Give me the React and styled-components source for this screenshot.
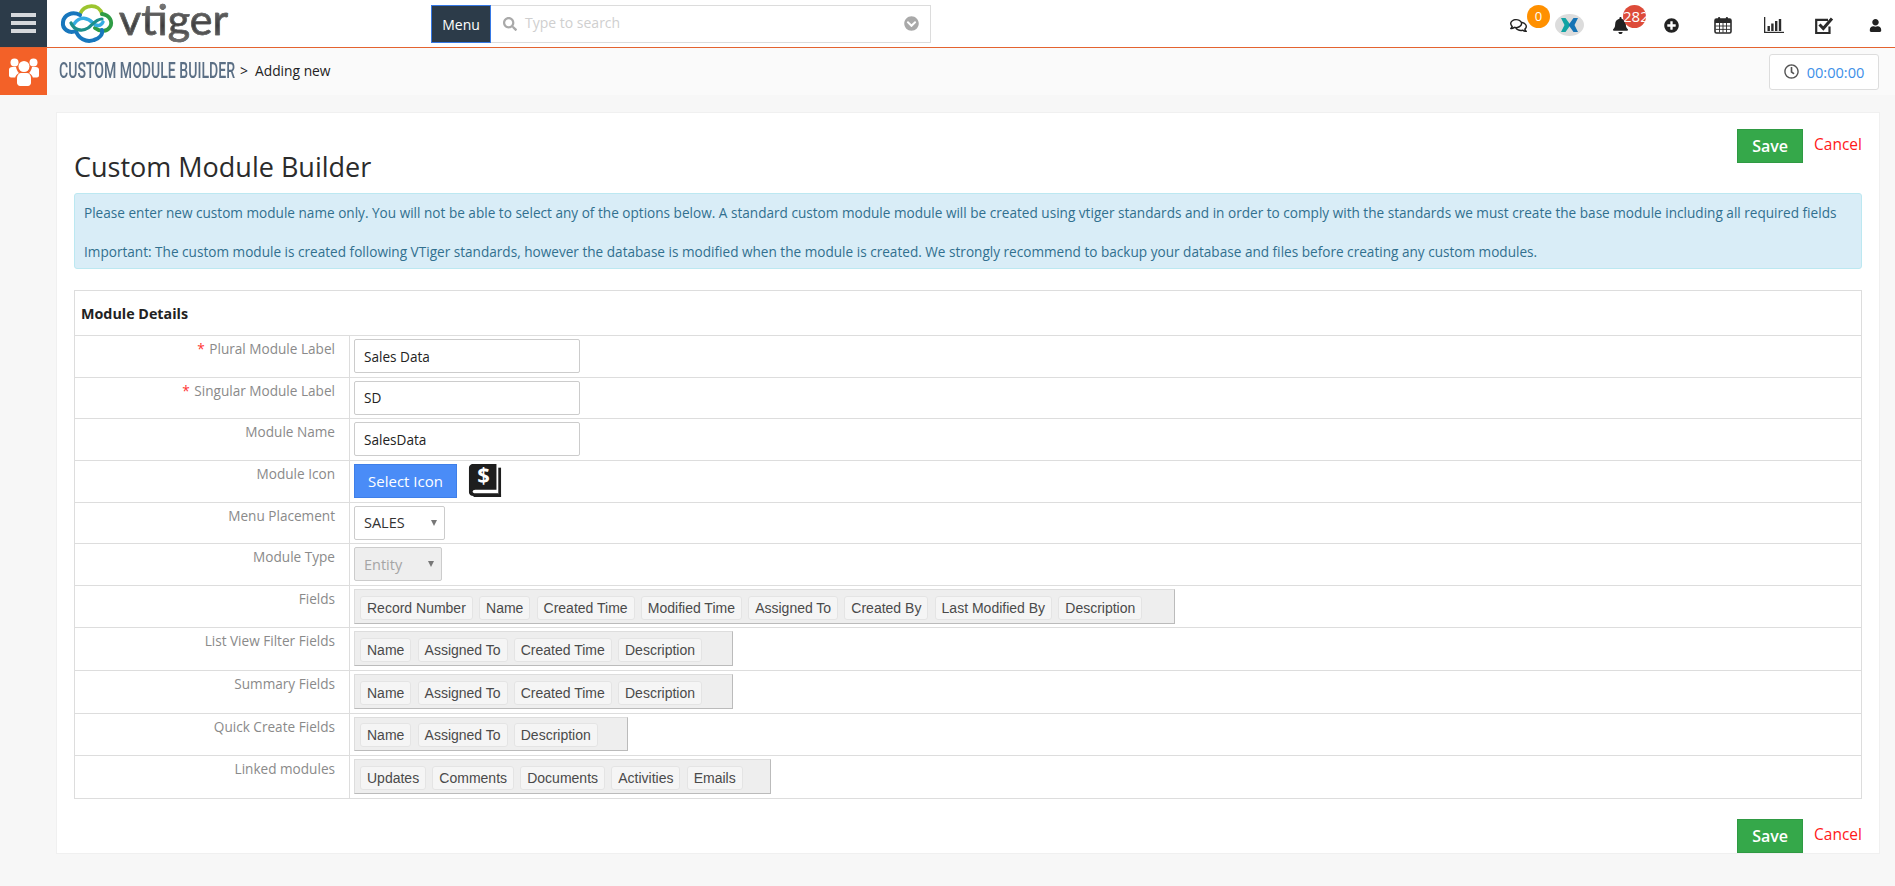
import React from 'react';
import styled, { createGlobalStyle } from 'styled-components';
import { FaSearch, FaChevronCircleDown, FaRegComments, FaBell, FaPlusCircle, FaUser, FaRegClock } from 'react-icons/fa';

const GlobalStyle = createGlobalStyle`
    body {
        margin: 0;
        background: #f7f7f7;
        font-family: "Open Sans", sans-serif;
        font-size: 13.6px;
        color: #222;
    }
`

const Logo = () => (
    <LogoWrap>
        <svg width="54" height="42" viewBox="0 0 54 42" fill="none" strokeLinecap="round">
            <path d="M20 11 C24 1 39 0 42 11" stroke="#9cc52f" strokeWidth="3.8" />
            <path d="M42 11 C50 12 53 19 50 24 C47 29 40 29 35 25" stroke="#2f9c45" strokeWidth="3.8" />
            <path d="M20 12 C12 8 4 12 3 19 C2 26 9 31 16 28 C18 35 26 40 34 37 C40 35 43 31 42 27" stroke="#1877bd" strokeWidth="4" />
            <path d="M14 21 C20 12 28 15 33 20 C37 24 41 23 43 19" stroke="#35ace2" strokeWidth="3.4" />
            <path d="M11 20 C14 27 22 29 28 25 C32 22 36 16 42 16" stroke="#1c8f8a" strokeWidth="3.2" />
        </svg>
        <LogoText>vtiger</LogoText>
    </LogoWrap>
)

const UsersIcon = () => (
    <svg width="30" height="28" viewBox="0 0 30 28" fill="#fff">
        <circle cx="5.5" cy="4.5" r="4" />
        <circle cx="24.5" cy="4.5" r="4" />
        <path d="M0 11.5C0 10 1.5 9 3 9h4c.6 3 1.6 4.600 3 6-2 1-3.400 3-3.800 4.500H2c-1 0-2-1-2-2z" />
        <path d="M30 11.500C30 10 28.500 9 27 9h-4c-.6 3-1.600 4.600-3 6 2 1 3.400 3 3.800 4.500H28c1 0 2-1 2-2z" />
        <circle cx="15" cy="8.500" r="5.500" />
        <path d="M8 20c0-3 2-5 4-5h6c2 0 4 2 4 5v5c0 1.500-1.500 3-3 3h-8c-1.500 0-3-1.500-3-3z" />
    </svg>
)

const CalendarIcon = () => (
    <svg width="18" height="18" viewBox="0 0 18 18">
        <rect x="1" y="3" width="16" height="14" rx="1.5" fill="#fff" stroke="#2b2b2b" strokeWidth="1.6" />
        <rect x="1" y="3" width="16" height="4" fill="#2b2b2b" />
        <rect x="4" y="1" width="2.2" height="4" rx="1" fill="#2b2b2b" />
        <rect x="11.8" y="1" width="2.2" height="4" rx="1" fill="#2b2b2b" />
        <path d="M5.5 7v9.5M9 7v9.5M12.5 7v9.5M1.5 10h15M1.5 13.4h15" stroke="#2b2b2b" strokeWidth="0.9" />
    </svg>
)

const ChartIcon = () => (
    <svg width="20" height="18" viewBox="0 0 20 18" fill="#2b2b2b">
        <rect x="0" y="1" width="1.3" height="16" />
        <rect x="0" y="15.8" width="20" height="1.2" />
        <rect x="3.5" y="10" width="2.4" height="5" />
        <rect x="7.2" y="7.5" width="2.4" height="7.5" />
        <rect x="11" y="5" width="2.4" height="10" />
        <rect x="14.8" y="3" width="2.4" height="12" />
    </svg>
)

const CheckIcon = () => (
    <svg width="19" height="19" viewBox="0 0 19 19" fill="none" stroke="#2b2b2b">
        <path d="M14.500 10.500V17H1.200V3.800H13" strokeWidth="2.200" />
        <path d="M4.500 8.500L8.300 12.500L17 2.500" strokeWidth="3" />
    </svg>
)

const XLogo = () => (
    <svg width="29" height="22" viewBox="0 0 29 22">
        <ellipse cx="14.5" cy="11" rx="14.5" ry="11" fill="#dcdcdc" />
        <path d="M6 4h4.500l5 7-5 7H6l3.500-7z" fill="#12a3a3" />
        <path d="M23 4h-4.500l-5 7 5 7H23l-3.500-7z" fill="#1573b5" />
    </svg>
)

const BookIcon = () => (
    <svg width="34" height="33" viewBox="0 0 35 36">
        <rect x="32" y="4" width="3" height="32" fill="#1e1e1e" />
        <rect x="5" y="33" width="30" height="3" fill="#1e1e1e" />
        <path d="M4 0h26v28H7c-2 0-3 1-3 2s1 2 3 2h25v3H5c-3 0-5-2-5-4V4c0-2 2-4 4-4z" fill="#1e1e1e" />
        <text x="16" y="21" textAnchor="middle" fill="#fff" fontFamily="Open Sans, sans-serif" fontWeight="700" fontSize="24">$</text>
    </svg>
)

const chipRows = [
    { label: 'Fields', width: 821, items: ['Record Number', 'Name', 'Created Time', 'Modified Time', 'Assigned To', 'Created By', 'Last Modified By', 'Description'] },
    { label: 'List View Filter Fields', width: 379, items: ['Name', 'Assigned To', 'Created Time', 'Description'] },
    { label: 'Summary Fields', width: 379, items: ['Name', 'Assigned To', 'Created Time', 'Description'] },
    { label: 'Quick Create Fields', width: 274, items: ['Name', 'Assigned To', 'Description'] },
    { label: 'Linked modules', width: 417, items: ['Updates', 'Comments', 'Documents', 'Activities', 'Emails'] },
]

const Actions = ({ $bottom }) => (
    <ActionBar $bottom={$bottom}>
        <SaveButton>Save</SaveButton>
        <CancelLink>Cancel</CancelLink>
    </ActionBar>
)

const App = () => (
    <>
        <GlobalStyle />
        <TopBar>
            <MenuToggle><span /><span /><span /></MenuToggle>
            <Logo />
            <SearchGroup>
                <MenuButton>Menu</MenuButton>
                <SearchBox>
                    <FaSearch size={14} color="#a9a9a9" />
                    <SearchHint>Type to search</SearchHint>
                    <FaChevronCircleDown size={15} color="#a9a9a9" />
                </SearchBox>
            </SearchGroup>
            <TopIcons>
                <TopIcon><FaRegComments size={17} /><Badge $color="#ff9000" $x={34} $size={13}>0</Badge></TopIcon>
                <TopIcon><XLogo /></TopIcon>
                <TopIcon><FaBell size={17} /><Badge $color="#dd4b39" $x={28} $size={15}>282</Badge></TopIcon>
                <TopIcon><FaPlusCircle size={15} /></TopIcon>
                <TopIcon><CalendarIcon /></TopIcon>
                <TopIcon><ChartIcon /></TopIcon>
                <TopIcon><CheckIcon /></TopIcon>
                <TopIcon><FaUser size={13} /></TopIcon>
            </TopIcons>
        </TopBar>
        <SubBar>
            <ModuleTile><UsersIcon /></ModuleTile>
            <CrumbTitle>CUSTOM MODULE BUILDER</CrumbTitle>
            <CrumbArrow>&gt;</CrumbArrow>
            <CrumbText>Adding new</CrumbText>
            <Timer><FaRegClock size={15} color="#555" />00:00:00</Timer>
        </SubBar>
        <Card>
            <Actions />
            <Title>Custom Module Builder</Title>
            <Notice>
                <p>Please enter new custom module name only. You will not be able to select any of the options below. A standard custom module module will be created using vtiger standards and in order to comply with the standards we must create the base module including all required fields</p>
                <p>Important: The custom module is created following VTiger standards, however the database is modified when the module is created. We strongly recommend to backup your database and files before creating any custom modules.</p>
            </Notice>
            <DetailsTable>
                <TableHead>Module Details</TableHead>
                <Row>
                    <Label><Req>*</Req> Plural Module Label</Label>
                    <Cell><TextInput defaultValue="Sales Data" /></Cell>
                </Row>
                <Row>
                    <Label><Req>*</Req> Singular Module Label</Label>
                    <Cell><TextInput defaultValue="SD" /></Cell>
                </Row>
                <Row>
                    <Label>Module Name</Label>
                    <Cell><TextInput defaultValue="SalesData" /></Cell>
                </Row>
                <Row>
                    <Label>Module Icon</Label>
                    <Cell>
                        <SelectIconButton>Select Icon</SelectIconButton>
                        <BookIcon />
                    </Cell>
                </Row>
                <Row>
                    <Label>Menu Placement</Label>
                    <Cell><SelectBox $width={91}>SALES<Caret /></SelectBox></Cell>
                </Row>
                <Row>
                    <Label>Module Type</Label>
                    <Cell><SelectBox $width={88} $disabled>Entity<Caret /></SelectBox></Cell>
                </Row>
                {chipRows.map(row => (
                    <Row key={row.label}>
                        <Label>{row.label}</Label>
                        <Cell>
                            <ChipBox $width={row.width}>
                                {row.items.map(item => <Chip key={item}>{item}</Chip>)}
                            </ChipBox>
                        </Cell>
                    </Row>
                ))}
            </DetailsTable>
            <Actions $bottom />
        </Card>
    </>
)

export default App;

//styling below this line

const TopBar = styled.header`
    height: 47px;
    background: #fff;
    border-bottom: 1px solid #e4632f;
    display: flex;
    align-items: center;
`

const MenuToggle = styled.div`
    width: 47px;
    height: 47px;
    background: #2c3b49;
    display: flex;
    flex-direction: column;
    justify-content: center;
    gap: 4px;
    padding: 0 11px 1px;
    box-sizing: border-box;
    span {
        height: 4px;
        background: #d5d8dc;
    }
`

const LogoWrap = styled.div`
    width: 384px;
    padding-left: 13px;
    box-sizing: border-box;
    display: flex;
    align-items: center;
    gap: 5px;
`

const LogoText = styled.span`
    font-family: "Lato", sans-serif;
    font-size: 43px;
    line-height: 42px;
    height: 46px;
    margin-top: -6px;
    background: linear-gradient(#8a8a8a, #3c3c3c 60%, #777);
    -webkit-background-clip: text;
    background-clip: text;
    color: transparent;
    -webkit-text-stroke: 0.6px #666;
`

const SearchGroup = styled.div`
    display: flex;
    height: 38px;
`

const MenuButton = styled.div`
    width: 60px;
    background: #2c3b49;
    border: 1px solid #3578e5;
    box-sizing: border-box;
    color: #fff;
    font-size: 14px;
    padding-top: 2px;
    display: flex;
    align-items: center;
    justify-content: center;
`

const SearchBox = styled.div`
    width: 440px;
    border: 1px solid #dcdcdc;
    border-left: none;
    box-sizing: border-box;
    background: #fff;
    display: flex;
    align-items: center;
    padding: 0 11px 0 12px;
`

const SearchHint = styled.span`
    flex: 1;
    margin: 0 0 2px 8px;
    color: #cfcfcf;
    font-size: 14px;
`

const TopIcons = styled.div`
    margin-left: auto;
    display: grid;
    grid-template-columns: repeat(8, 51px);
    margin-right: -6px;
    color: #222;
`

const TopIcon = styled.div`
    position: relative;
    height: 47px;
    display: flex;
    align-items: center;
    justify-content: center;
    padding-top: 3px;
    box-sizing: border-box;
`

const Badge = styled.span`
    position: absolute;
    top: 5px;
    left: ${props => props.$x}px;
    width: 23px;
    height: 23px;
    border-radius: 50%;
    background: ${props => props.$color};
    color: #fff;
    font-size: ${props => props.$size}px;
    line-height: 22px;
    text-align: center;
    overflow: hidden;
    white-space: nowrap;
`

const SubBar = styled.div`
    height: 47px;
    background: #fafafa;
    display: flex;
    align-items: center;
`

const ModuleTile = styled.div`
    width: 47px;
    height: 47px;
    background: #f36128;
    display: flex;
    align-items: center;
    justify-content: center;
`

const CrumbTitle = styled.div`
    width: 176px;
    margin: -3px 0 0 12px;
    font-family: "Roboto", sans-serif;
    font-weight: 500;
    font-size: 22px;
    color: #5b6f85;
    white-space: nowrap;
    transform: scaleX(0.64);
    transform-origin: left;
`

const CrumbArrow = styled.span`
    margin: -2px 7px 0 5px;
    font-size: 14px;
`

const CrumbText = styled.span`
    margin-top: -2px;
    font-size: 13.8px;
`

const Timer = styled.div`
    margin: 0 16px 0 auto;
    width: 110px;
    height: 36px;
    background: #fff;
    border: 1px solid #ddd;
    border-radius: 3px;
    box-sizing: border-box;
    color: #3d8fe8;
    font-size: 14.6px;
    display: flex;
    align-items: center;
    justify-content: center;
    gap: 8px;
`

const Card = styled.main`
    margin: 17px 15px 0 56px;
    height: 742px;
    padding: 0 17px;
    box-sizing: border-box;
    background: #fff;
    border: 1px solid #f0f0f0;
`

const ActionBar = styled.div`
    display: flex;
    justify-content: flex-end;
    gap: 11px;
    padding-top: ${props => props.$bottom ? '20px' : '16px'};
    height: 34px;
    box-sizing: content-box;
`

const SaveButton = styled.button`
    width: 66px;
    height: 34px;
    background: #35a84a;
    border: 1px solid #2f9a43;
    color: #fff;
    font-family: inherit;
    font-size: 16px;
    font-weight: 600;
`

const CancelLink = styled.a`
    color: #ff1a1a;
    font-size: 15.5px;
    line-height: 30px;
`

const Title = styled.h1`
    margin: -14px 0 0;
    font-size: 27px;
    font-weight: 400;
    line-height: 36px;
    color: #2b2b2b;
`

const Notice = styled.div`
    margin-top: 8px;
    height: 76px;
    padding: 10px 9px 0;
    box-sizing: border-box;
    background: #d9edf7;
    border: 1px solid #bce8f1;
    border-radius: 3px;
    color: #31708f;
    p {
        margin: 0 0 21px;
        line-height: 18px;
    }
`

const DetailsTable = styled.section`
    margin-top: 21px;
    border: 1px solid #ddd;
    border-bottom: none;
`

const TableHead = styled.div`
    height: 45px;
    padding: 13px 6px 0;
    box-sizing: border-box;
    font-weight: 700;
    font-size: 14.3px;
    border-bottom: 1px solid #ddd;
`

const Row = styled.div`
    display: grid;
    grid-template-columns: 275px 1fr;
    border-bottom: 1px solid #ddd;
`

const Label = styled.div`
    padding: 3px 14px 0 0;
    text-align: right;
    color: #8a8a8a;
    border-right: 1px solid #ddd;
    line-height: 20px;
`

const Req = styled.span`
    color: #f33;
    margin-right: 1px;
`

const Cell = styled.div`
    padding: 3px 4px 3.67px;
    display: flex;
    align-items: center;
    gap: 11px;
`

const TextInput = styled.input`
    width: 226px;
    height: 34px;
    padding: 0 9px;
    box-sizing: border-box;
    border: 1px solid #ccc;
    border-radius: 2px;
    font-family: inherit;
    font-size: 13.6px;
    color: #222;
    outline: none;
`

const SelectIconButton = styled.button`
    width: 103px;
    height: 34px;
    background: #4a8cf7;
    border: 1px solid #3f7fe8;
    color: #fff;
    font-family: inherit;
    font-size: 15px;
`

const SelectBox = styled.div`
    position: relative;
    width: ${props => props.$width}px;
    height: 34px;
    padding: 0 9px;
    box-sizing: border-box;
    border: 1px solid #ccc;
    border-radius: 2px;
    display: flex;
    align-items: center;
    font-size: 14.5px;
    color: ${props => props.$disabled ? '#a5a5a5' : '#333'};
    background: ${props => props.$disabled ? '#eee' : '#fff'};
`

const Caret = styled.span`
    position: absolute;
    right: 7px;
    top: 13px;
    border-left: 3.5px solid transparent;
    border-right: 3.5px solid transparent;
    border-top: 6px solid #777;
`

const ChipBox = styled.div`
    width: ${props => props.$width}px;
    height: 34.9px;
    padding: 0 5px 3px;
    box-sizing: border-box;
    background: #eee;
    border: 1px solid #ddd;
    border-right-color: #bbb;
    border-bottom-color: #bbb;
    display: flex;
    align-items: flex-end;
    gap: 6.2px;
    white-space: nowrap;
`

const Chip = styled.span`
    height: 24px;
    padding: 0 6px;
    box-sizing: border-box;
    background: #f5f5f5;
    border: 1px solid #e4e4e4;
    border-radius: 3px;
    font-family: "Liberation Sans", Arial, sans-serif;
    font-size: 14px;
    line-height: 22px;
    color: #4a4a4a;
`
